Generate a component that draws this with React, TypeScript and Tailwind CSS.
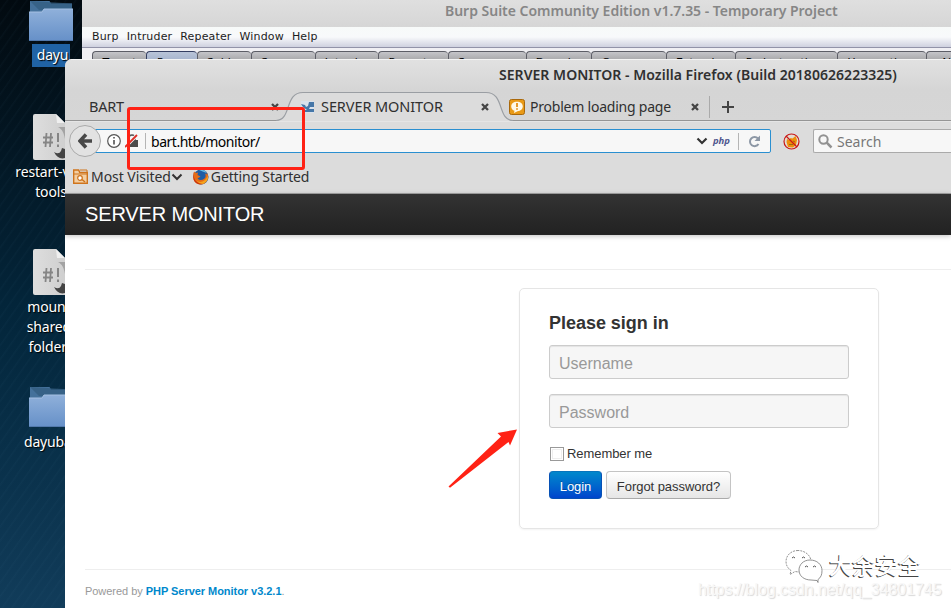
import React from "react";

const ui = "font-['Noto_Sans',sans-serif]";

function Folder({ id }: { id: string }) {
  return (
    <svg width="44" height="41" viewBox="0 0 44 41" className="shrink-0">
      <defs>
        <linearGradient id={id} x1="0" y1="0" x2="0" y2="1">
          <stop offset="0" stopColor="#8fb0da" />
          <stop offset="1" stopColor="#6690c8" />
        </linearGradient>
      </defs>
      <path d="M1 1h19.500l1.500 2.500h21V30H1z" fill="#44719b" />
      <path d="M1 1l9 9h33V3.500" fill="#315a7d" opacity=".65" />
      <path d="M0 12h13l2-3h29v32H0z" fill={`url(#${id})`} />
      <path d="M0 12h13l2-3h29" fill="none" stroke="#a5c0e2" strokeWidth="1" />
      <path d="M0 40.500h44" stroke="#5279ac" />
    </svg>
  );
}

function Script() {
  return (
    <svg width="44" height="46" viewBox="0 0 44 46" className="shrink-0">
      <defs>
        <linearGradient id="paper" x1="0" y1="0" x2="1" y2="0">
          <stop offset="0" stopColor="#dedede" />
          <stop offset="1" stopColor="#cfcfcf" />
        </linearGradient>
      </defs>
      <path d="M2 0h21l9 9v37H2q-2 0-2-2V2q0-2 2-2z" fill="url(#paper)" />
      <path d="M23 0l9 9h-8z" fill="#efefef" />
      <path d="M25 13h7v12c-1-6-3-10-7-12z" fill="#a3a3a3" />
      <path d="M21 38q5 3 7-1l1-3 3 1v9q-7 2-11-6z" fill="#444" />
      <path d="M13.500 19l-1 14M18 19l-1 14M10 23.500h10M10 28.500h10" stroke="#858585" strokeWidth="1.800" />
      <path d="M25 19v9M25 30.500v2.500" stroke="#858585" strokeWidth="2" />
    </svg>
  );
}

function DesktopLabel({ children }: { children: React.ReactNode }) {
  return (
    <div className="text-center text-[14px] leading-[20px] tracking-[-0.15px] text-white whitespace-nowrap [text-shadow:1px_1px_1px_#000]">
      {children}
    </div>
  );
}

function Close({ className = "" }: { className?: string }) {
  return (
    <svg width="8" height="8" viewBox="0 0 8 8" className={`shrink-0 ${className}`}>
      <path d="M1 1l6 6M7 1l-6 6" stroke="#454545" strokeWidth="2.300" />
    </svg>
  );
}

const burpTabs: [string, string][] = [
  ["Target", "w-[54px]"],
  ["Proxy", "w-[51px]"],
  ["Spider", "w-[54px]"],
  ["Scanner", "w-[64px]"],
  ["Intruder", "w-[63px]"],
  ["Repeater", "w-[70px]"],
  ["Sequencer", "w-[78px]"],
  ["Decoder", "w-[65px]"],
  ["Comparer", "w-[75px]"],
  ["Extender", "w-[69px]"],
  ["Project options", "w-[102px]"],
  ["User options", "w-[89px]"],
  ["Alerts", "w-[60px]"],
];

function BurpWindow() {
  return (
    <div className="absolute left-[82px] top-0 w-[869px] h-[66px] overflow-hidden bg-[#f0eff3] flex flex-col">
      <div className={`h-[27px] shrink-0 bg-linear-to-b from-[#dfdfdf] to-[#d6d6d6] pl-[363px] text-[14px] leading-[22px] font-semibold text-[#868686] whitespace-nowrap ${ui}`}>
        <span className="tracking-[-0.02px]">Burp Suite Community Edition v1.7.35 - Temporary Project</span>
      </div>
      <div className="h-[21px] shrink-0 flex items-center gap-[8px] pl-[10px] pt-px border-b border-[#9293a8] bg-linear-to-b from-[#f7faf9] via-[#f8f9fb] to-[#cfd1df] text-[11px] tracking-[0.16px] text-[#1c1c1c] font-['DejaVu_Sans',sans-serif]">
        <span>Burp</span><span>Intruder</span><span>Repeater</span><span>Window</span><span>Help</span>
      </div>
      <div className="flex pt-[3px] pl-[10px]">
        {burpTabs.map(([label, width], i) => (
          <div
            key={label}
            className={`${width} shrink-0 h-[28px] border-t border-l rounded-t-[4px] pt-[4px] text-center text-[11px] leading-[14px] text-black whitespace-nowrap font-['DejaVu_Sans',sans-serif] ${i === 1 ? "border-[#343e61] bg-linear-to-b from-[#b9c4d8] to-[#7e92b5]" : "border-[#5c5d66] bg-linear-to-b from-[#c5c5c9] to-[#666]"}`}
          >
            {label}
          </div>
        ))}
      </div>
    </div>
  );
}

function TabStrip() {
  return (
    <div className="relative h-[30px] shrink-0 border-b border-[#959595] text-[14.500px] text-[#303030]">
      <svg width="240" height="31" viewBox="0 0 240 31" className="absolute left-[211px] top-0">
        <path d="M0 29.500C16 29.500 8 1.500 27 1.500H210C229 1.500 221 29.500 237 29.500V31H0z" fill="#dcdcdc" />
        <path d="M0 29.500C16 29.500 8 1.500 27 1.500H210C229 1.500 221 29.500 237 29.500" fill="none" stroke="#9a9ea3" strokeWidth="1.200" />
      </svg>
      <div className="relative flex items-center h-[31px]">
        <span className="ml-[24px] w-[182px] tracking-[-0.25px]">BART</span>
        <Close />
        <svg width="13" height="12" viewBox="0 0 13 12" className="ml-[22px] shrink-0">
          <rect width="13" height="12" fill="#d9e2ec" />
          <path d="M0 3l4 1 1 2 2-1 1-4h5v5H9l-1 2h5v3H3V9h3L2 6z" fill="#4677a8" />
        </svg>
        <span className="ml-[7px] w-[160px] tracking-[-0.08px]">SERVER MONITOR</span>
        <Close />
        <svg width="16" height="16" viewBox="0 0 16 16" className="ml-[20px] shrink-0">
          <rect x=".5" y=".5" width="15" height="15" rx="2" fill="#e99a17" stroke="#a9680b" />
          <path d="M8 2.800c-3.500 0-5.800 2-5.800 4.700 0 2.200 1.500 3.700 3.300 4.300L5 14l3.500-1.800c3.200-.2 5.300-2 5.300-4.700C13.800 4.800 11.500 2.800 8 2.800z" fill="#fff9e8" />
          <path d="M8 4v4M8 9.200v1.600" stroke="#e18a0c" strokeWidth="1.700" />
        </svg>
        <span className="ml-[5px] w-[161px] text-[14px] tracking-[-0.22px]">Problem loading page</span>
        <Close />
        <i className="ml-[10px] h-[22px] w-px bg-[#aaa]" />
        <svg width="12" height="12" viewBox="0 0 12 12" className="ml-[12px]">
          <path d="M6 0v12M0 6h12" stroke="#444" strokeWidth="2" />
        </svg>
      </div>
    </div>
  );
}

function NavBar() {
  return (
    <div className="relative flex items-center h-[40px] shrink-0 border-t border-[#e5e5e5] pl-[18px] pb-px">
      <div className="flex items-center w-[688px] h-[24px] border border-[#2a8fd0] rounded-r-[2px] bg-[#f7f7f7] text-[14px] text-black">
        <svg width="14" height="14" viewBox="0 0 14 14" className="ml-[23px] shrink-0">
          <circle cx="7" cy="7" r="6.300" fill="#fff" stroke="#555" strokeWidth="1.200" />
          <path d="M7 6v4.500M7 3v1.500" stroke="#444" strokeWidth="1.500" />
        </svg>
        <svg width="14" height="14" viewBox="0 0 14 14" className="ml-[4px] shrink-0">
          <path d="M4 6V4q0-3 3-3t3 3v2" fill="none" stroke="#555" strokeWidth="1.500" />
          <rect x="3" y="6" width="10" height="7" fill="#4b4b4b" />
          <path d="M0 13L12 1" stroke="#f7f7f7" strokeWidth="3.500" />
          <path d="M0 13L12 1" stroke="#dd2d25" strokeWidth="1.800" />
        </svg>
        <i className="ml-[6px] h-[16px] w-px bg-[#b5b5b5]" />
        <span className="ml-[5px] grow tracking-[-0.48px]">bart.htb/monitor/</span>
        <svg width="12" height="8" viewBox="0 0 12 8"><path d="M1.500 1.500L6 6l4.500-4.500" fill="none" stroke="#333" strokeWidth="2.200" /></svg>
        <span className="ml-[5px] text-[9.500px] font-bold italic text-[#50578e] leading-none">php</span>
        <i className="ml-[8px] h-[17px] w-px bg-[#b5b5b5]" />
        <svg width="13" height="13" viewBox="0 0 13 13" className="ml-[9px] mr-[9px] shrink-0">
          <path d="M10 3.500A4.600 4.600 0 1 0 10.500 9" fill="none" stroke="#8c97a5" strokeWidth="2" />
          <path d="M12 .5V6H6.500z" fill="#8c97a5" />
        </svg>
      </div>
      <svg width="17" height="17" viewBox="0 0 17 17" className="ml-[12px] shrink-0">
        <circle cx="8.500" cy="8.500" r="7.500" fill="#e3dccf" />
        <path d="M3.500 9l.5-3 2 1 1.500-2 2 .5L12.500 3l1.500 4-1 5-3 2.500-5-.5z" fill="#ee8e0c" />
        <path d="M6 11.500h4M10 8l2 1" stroke="#8a5a1a" strokeWidth=".8" />
        <circle cx="8.500" cy="8.500" r="7.500" fill="none" stroke="#c91919" strokeWidth="1.200" />
        <path d="M3 3l11 11" stroke="#c91919" strokeWidth="1.200" />
      </svg>
      <div className="ml-[13px] h-[24px] grow border border-r-0 border-[#aaa] rounded-l-[2px] bg-[#f7f7f7] flex items-center text-[14px] text-[#777]">
        <svg width="15" height="15" viewBox="0 0 15 15" className="ml-[4px] mr-[4px]">
          <circle cx="5.500" cy="5.500" r="4.200" fill="none" stroke="#929292" strokeWidth="2" />
          <path d="M8.700 8.700L13.500 13.500" stroke="#929292" strokeWidth="2.500" />
        </svg>
        Search
      </div>
      <div className="absolute left-[4px] top-[3px] size-[32px] rounded-full border border-[#aaa] bg-[#e2e2e2] flex items-center justify-center">
        <svg width="15" height="16" viewBox="0 0 15 16">
          <path d="M8 1.500L2 8l6 6.500M2.500 8H14" fill="none" stroke="#484848" strokeWidth="3.500" />
        </svg>
      </div>
    </div>
  );
}

function Bookmarks() {
  return (
    <div className="flex items-center h-[33px] shrink-0 border-b border-[#a4a4a4] text-[14px] text-[#303030] pl-[8px] pb-px">
      <svg width="15" height="15" viewBox="0 0 15 15" className="shrink-0">
        <path d="M.7 14.300V1h5l1 2.500h7.600v10.800z" fill="#f3cfa3" stroke="#cf741c" strokeWidth="1.400" />
        <path d="M1 5h13M7 1h7v2" fill="none" stroke="#cf741c" />
        <circle cx="7" cy="9" r="2.300" fill="#fff" stroke="#cf741c" strokeWidth="1.200" />
        <path d="M9 10.500l3 2.500" stroke="#cf741c" strokeWidth="1.500" />
      </svg>
      <span className="ml-[3px] tracking-[-0.05px]">Most Visited</span>
      <svg width="12" height="8" viewBox="0 0 12 8"><path d="M1.500 1.500L6 6l4.500-4.500" fill="none" stroke="#333" strokeWidth="2" /></svg>
      <svg width="16" height="16" viewBox="0 0 16 16" className="ml-[10px] shrink-0">
        <circle cx="8" cy="8" r="7.500" fill="#1f5da6" />
        <path d="M6 1q5-1 8 3l-3-1z" fill="#68bce5" />
        <path d="M1 2.500l2 1.500 2-.5-.5 2.500 3 1.500-3 2q3 3 7 0 2-2 .5-5l2 1-.5-2.500q3 4 1 8-3 5-8 4.500Q.5 14.500.2 8.500.2 5 1 2.500z" fill="#e66b16" />
        <path d="M3 11q4 4 9 0l3-4q.5 5-4 7.500-5 1-8-3.500z" fill="#f5a31b" />
        <path d="M1 3q-1 7 3 10 3 2.500 6 2Q3 16 .8 11q-1-5 .2-8z" fill="#c93012" />
      </svg>
      <span className="ml-[2px] tracking-[-0.15px]">Getting Started</span>
    </div>
  );
}

function LoginPage() {
  const field = "block w-[300px] h-[34px] border border-[#ccc] rounded-[3px] bg-[#f6f6f6] px-[9px] pt-[4px] text-[16px] placeholder-[#999] shadow-[inset_0_1px_1px_rgba(0,0,0,0.075)]";
  return (
    <div className="grow bg-white flex flex-col text-[#333] font-['Liberation_Sans',Arial,sans-serif]">
      <header className="h-[41px] shrink-0 pl-[20px] border-b border-[#252525] bg-linear-to-b from-[#333] to-[#222] text-[20px] leading-[40px] tracking-[-0.15px] text-white shadow-[0_1px_5px_rgba(0,0,0,0.25)]">
        SERVER MONITOR
      </header>
      <main className="mt-[34px] ml-[20px] h-[301px] shrink-0 border-y border-[#eee] pt-[18px]">
        <form className="ml-[434px] w-[360px] h-[241px] border border-[#e5e5e5] rounded-[5px] pt-[21px] pl-[29px] shadow-[0_1px_2px_rgba(0,0,0,0.05)]">
          <h1 className="text-[18px] leading-[27px] font-bold tracking-[-0.03px]">Please sign in</h1>
          <input className={`${field} mt-[8px]`} placeholder="Username" />
          <input className={`${field} mt-[15px]`} placeholder="Password" type="password" />
          <label className="flex items-center h-[20px] mt-[15px] pt-px text-[13px] tracking-[-0.07px]">
            <span className="ml-px mr-[3px] size-[14px] border border-[#999] bg-white shadow-[inset_0_0_0_1px_#fff,inset_0_0_0_2px_#eee]" />
            <span className="pt-px">Remember me</span>
          </label>
          <div className="flex gap-[4px] mt-[8px] text-[13px]">
            <button type="button" className="w-[53px] h-[28px] rounded-[4px] border border-[#0751b5] border-t-[#0874bc] bg-linear-to-b from-[#0088cc] to-[#0044cc] text-white leading-[26px] pt-[2px] tracking-[-0.1px] [text-shadow:0_-1px_0_rgba(0,0,0,.25)]">Login</button>
            <button type="button" className="w-[125px] h-[28px] rounded-[4px] border border-[#c4c4c4] border-b-[#aaa] bg-linear-to-b from-white to-[#e6e6e6] leading-[26px] pt-[2px] tracking-[-0.05px]">Forgot password?</button>
          </div>
        </form>
      </main>
      <footer className="pl-[20px] pt-[13px] text-[11px] leading-[16px] tracking-[-0.04px] text-[#999]">
        Powered by <b className="text-[#0088cc]">PHP Server Monitor v3.2.1</b>.
      </footer>
    </div>
  );
}

function FirefoxWindow() {
  return (
    <div className={`absolute left-[65px] top-[59px] w-[886px] h-[549px] overflow-hidden rounded-tl-[7px] bg-[#dcdcdc] flex flex-col ${ui}`}>
      <div className="flex flex-col shrink-0 border-t border-[#f4f4f4] bg-linear-to-b from-[#e1e1e1] via-[#d5d5d5] to-[#d6d6d6]">
        <div className="h-[31px] pl-[434px] text-[14px] leading-[30px] font-semibold text-[#303030] whitespace-nowrap tracking-[0.04px]">
          SERVER MONITOR - Mozilla Firefox (Build 20180626223325)
        </div>
        <TabStrip />
      </div>
      <NavBar />
      <Bookmarks />
      <LoginPage />
    </div>
  );
}

export default function App() {
  return (
    <div className="relative w-[951px] h-[608px] overflow-hidden bg-linear-to-b from-[#020a10] via-[#03253a] to-[#113c5a]">
      <div className="absolute inset-0 bg-[repeating-linear-gradient(125deg,transparent_0px,transparent_5px,rgba(80,130,160,0.05)_6px,transparent_8px)]" />
      <div className={`absolute left-[1px] top-0 w-[100px] flex flex-col items-center ${ui}`}>
        <Folder id="folderTop" />
        <div className="mt-[3px] h-[23px] w-[38px] bg-[#2063a5] pl-[3px] pt-px"><DesktopLabel>dayu</DesktopLabel></div>
        <div className="mt-[47px] ml-[7px]"><Script /></div>
        <div className="mt-[2px]"><DesktopLabel>restart-vm-<br />tools</DesktopLabel></div>
        <div className="mt-[47px] ml-[7px]"><Script /></div>
        <div className="mt-[2px]"><DesktopLabel>mount-<br />shared-<br />folders</DesktopLabel></div>
        <div className="mt-[29px]"><Folder id="folderBottom" /></div>
        <div className="mt-[5px] ml-[2px]"><DesktopLabel>dayubao</DesktopLabel></div>
      </div>
      <BurpWindow />
      <FirefoxWindow />
      <div className="absolute left-[127px] top-[107px] w-[178px] h-[63px] border-[3px] border-[#ff2215] rounded-[3px]" />
      <svg width="70" height="60" viewBox="0 0 70 60" className="absolute left-[448px] top-[429px]">
        <path d="M.5 57.500L53 7.500 49.500 4 69 .5 62 16.500 60.500 13 2 58.800z" fill="#ff2215" />
      </svg>
      <svg width="38" height="34" viewBox="0 0 38 34" className="absolute left-[785px] top-[549px]">
        <g fill="#fff" stroke="#777" strokeWidth=".8">
          <path d="M13 1.500c-7 0-12 5-12 11 0 4 2 7 5 9l-1 4 5-3c11 2 16-3 16-10 0-6-6-11-13-11z" strokeDasharray="2 1" />
          <path d="M25 11c-7 0-11 5-11 10 0 6 5 10 12 10l6 .5 1 2v-3c3-2 4-5 4-9 0-6-5-10.500-12-10.500z" />
        </g>
        <path d="M7 9q1.500-2 3 0M17 9q1.500-2 3 0M20 18q1.500-2 3 0M28 18q1.500-2 3 0" fill="none" stroke="#555" />
      </svg>
      <div className="absolute left-[829px] top-[547px] text-[23px] leading-[34px] text-white whitespace-nowrap font-['Noto_Sans_CJK_SC',sans-serif] font-medium [text-shadow:-1px_1px_0_#444]">大余安全</div>
      <div className="absolute left-[698px] top-[580px] text-[16px] leading-[20px] tracking-[-0.06px] text-[#f8f8f8] whitespace-nowrap font-['Liberation_Sans',Arial,sans-serif] [text-shadow:1px_1px_1px_#d8d8d8]">https://blog.csdn.net/qq_34801745</div>
    </div>
  );
}
